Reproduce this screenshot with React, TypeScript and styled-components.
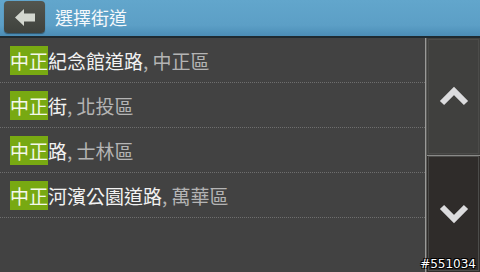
import React, { FC } from "react"
import styled, { createGlobalStyle } from "styled-components"

const GlobalStyle = createGlobalStyle`
  html, body { margin: 0; padding: 0; }
  body {
    width: 480px;
    height: 272px;
    overflow: hidden;
    background: #424242;
    font-family: "Noto Sans CJK TC", "Noto Sans", sans-serif;
  }
`

const Screen = styled.div`
  width: 480px;
  height: 272px;
  display: flex;
  flex-direction: column;
  position: relative;
`

const Header = styled.div`
  height: 38px;
  display: flex;
  align-items: center;
  gap: 10px;
  padding-left: 4px;
  padding-bottom: 2px;
  background: linear-gradient(#62a6cc, #5c9fc6 70%, #4b8db6);
  border-bottom: 2px solid #1f2a30;
  box-sizing: border-box;
`

const BackButton = styled.div`
  width: 41px;
  height: 32px;
  border-radius: 4px;
  background: linear-gradient(#53564f, #3f423d);
  box-shadow: 0 1px 1px rgba(0, 0, 0, 0.4);
  display: flex;
  align-items: center;
  justify-content: center;
`

const Title = styled.div`
  color: #f4f8fb;
  font-size: 18px;
  line-height: 1;
`

const Body = styled.div`
  flex: 1;
  display: flex;
`

const List = styled.div`
  flex: 1;
  display: flex;
  flex-direction: column;
  background: #424242;
  border-right: 1px solid #9a9a98;
`

const Row = styled.div`
  height: 45px;
  display: flex;
  align-items: center;
  padding-left: 10px;
  font-size: 19px;
  color: #f2f2f2;
  white-space: nowrap;
  border-bottom: 1px dotted #6e6e6e;
  box-sizing: border-box;
`

const Match = styled.span`
  background: #78a912;
  color: #f4f8ea;
  padding: 1px 0;
`

const District = styled.span`
  color: #b4b4b4;
`

const Side = styled.div`
  width: 53px;
  display: flex;
  flex-direction: column;
  border-left: 1px solid #5e5e5c;
`

const ScrollButton = styled.div<{ $dark?: boolean }>`
  flex: 1;
  display: flex;
  align-items: center;
  justify-content: center;
  background: ${({ $dark }) => ($dark ? "#2f2c2a" : "#40403e")};
  border-top: ${({ $dark }) => ($dark ? "1px solid #8a8a88" : "none")};
  outline: 1px solid #4c4c4a;
  outline-offset: -2px;
`

const Tag = styled.div`
  position: absolute;
  right: 4px;
  bottom: 1px;
  color: #fff;
  font-family: "DejaVu Sans", sans-serif;
  font-size: 12px;
  text-shadow: 1px 1px 0 #000, -1px -1px 0 #000, 1px -1px 0 #000, -1px 1px 0 #000;
`

const items = [
  { rest: "紀念館道路", district: "中正區" },
  { rest: "街", district: "北投區" },
  { rest: "路", district: "士林區" },
  { rest: "河濱公園道路", district: "萬華區" }
]

const Chevron: FC<{ up?: boolean }> = ({ up }) => (
  <svg width="30" height="20" viewBox="0 0 30 20">
    <polyline
      points={ up ? "3,17 15,5 27,17" : "3,3 15,15 27,3" }
      fill="none"
      stroke="#dcdcde"
      strokeWidth="6"
      strokeLinejoin="miter"
    />
  </svg>
)

const App: FC = () => (
  <Screen>
    <GlobalStyle />
    <Header>
      <BackButton>
        <svg width="20" height="17" viewBox="0 0 20 17">
          <polygon points="0,8.5 9,0 9,4.5 20,4.5 20,12.5 9,12.5 9,17" fill="#d3d7cf" />
        </svg>
      </BackButton>
      <Title>選擇街道</Title>
    </Header>
    <Body>
      <List>
        { items.map(item => (
          <Row key={ item.rest }>
            <Match>中正</Match>
            { item.rest }
            <District>, { item.district }</District>
          </Row>
        )) }
      </List>
      <Side>
        <ScrollButton><Chevron up /></ScrollButton>
        <ScrollButton $dark><Chevron /></ScrollButton>
      </Side>
    </Body>
    <Tag>#551034</Tag>
  </Screen>
)

export default App
